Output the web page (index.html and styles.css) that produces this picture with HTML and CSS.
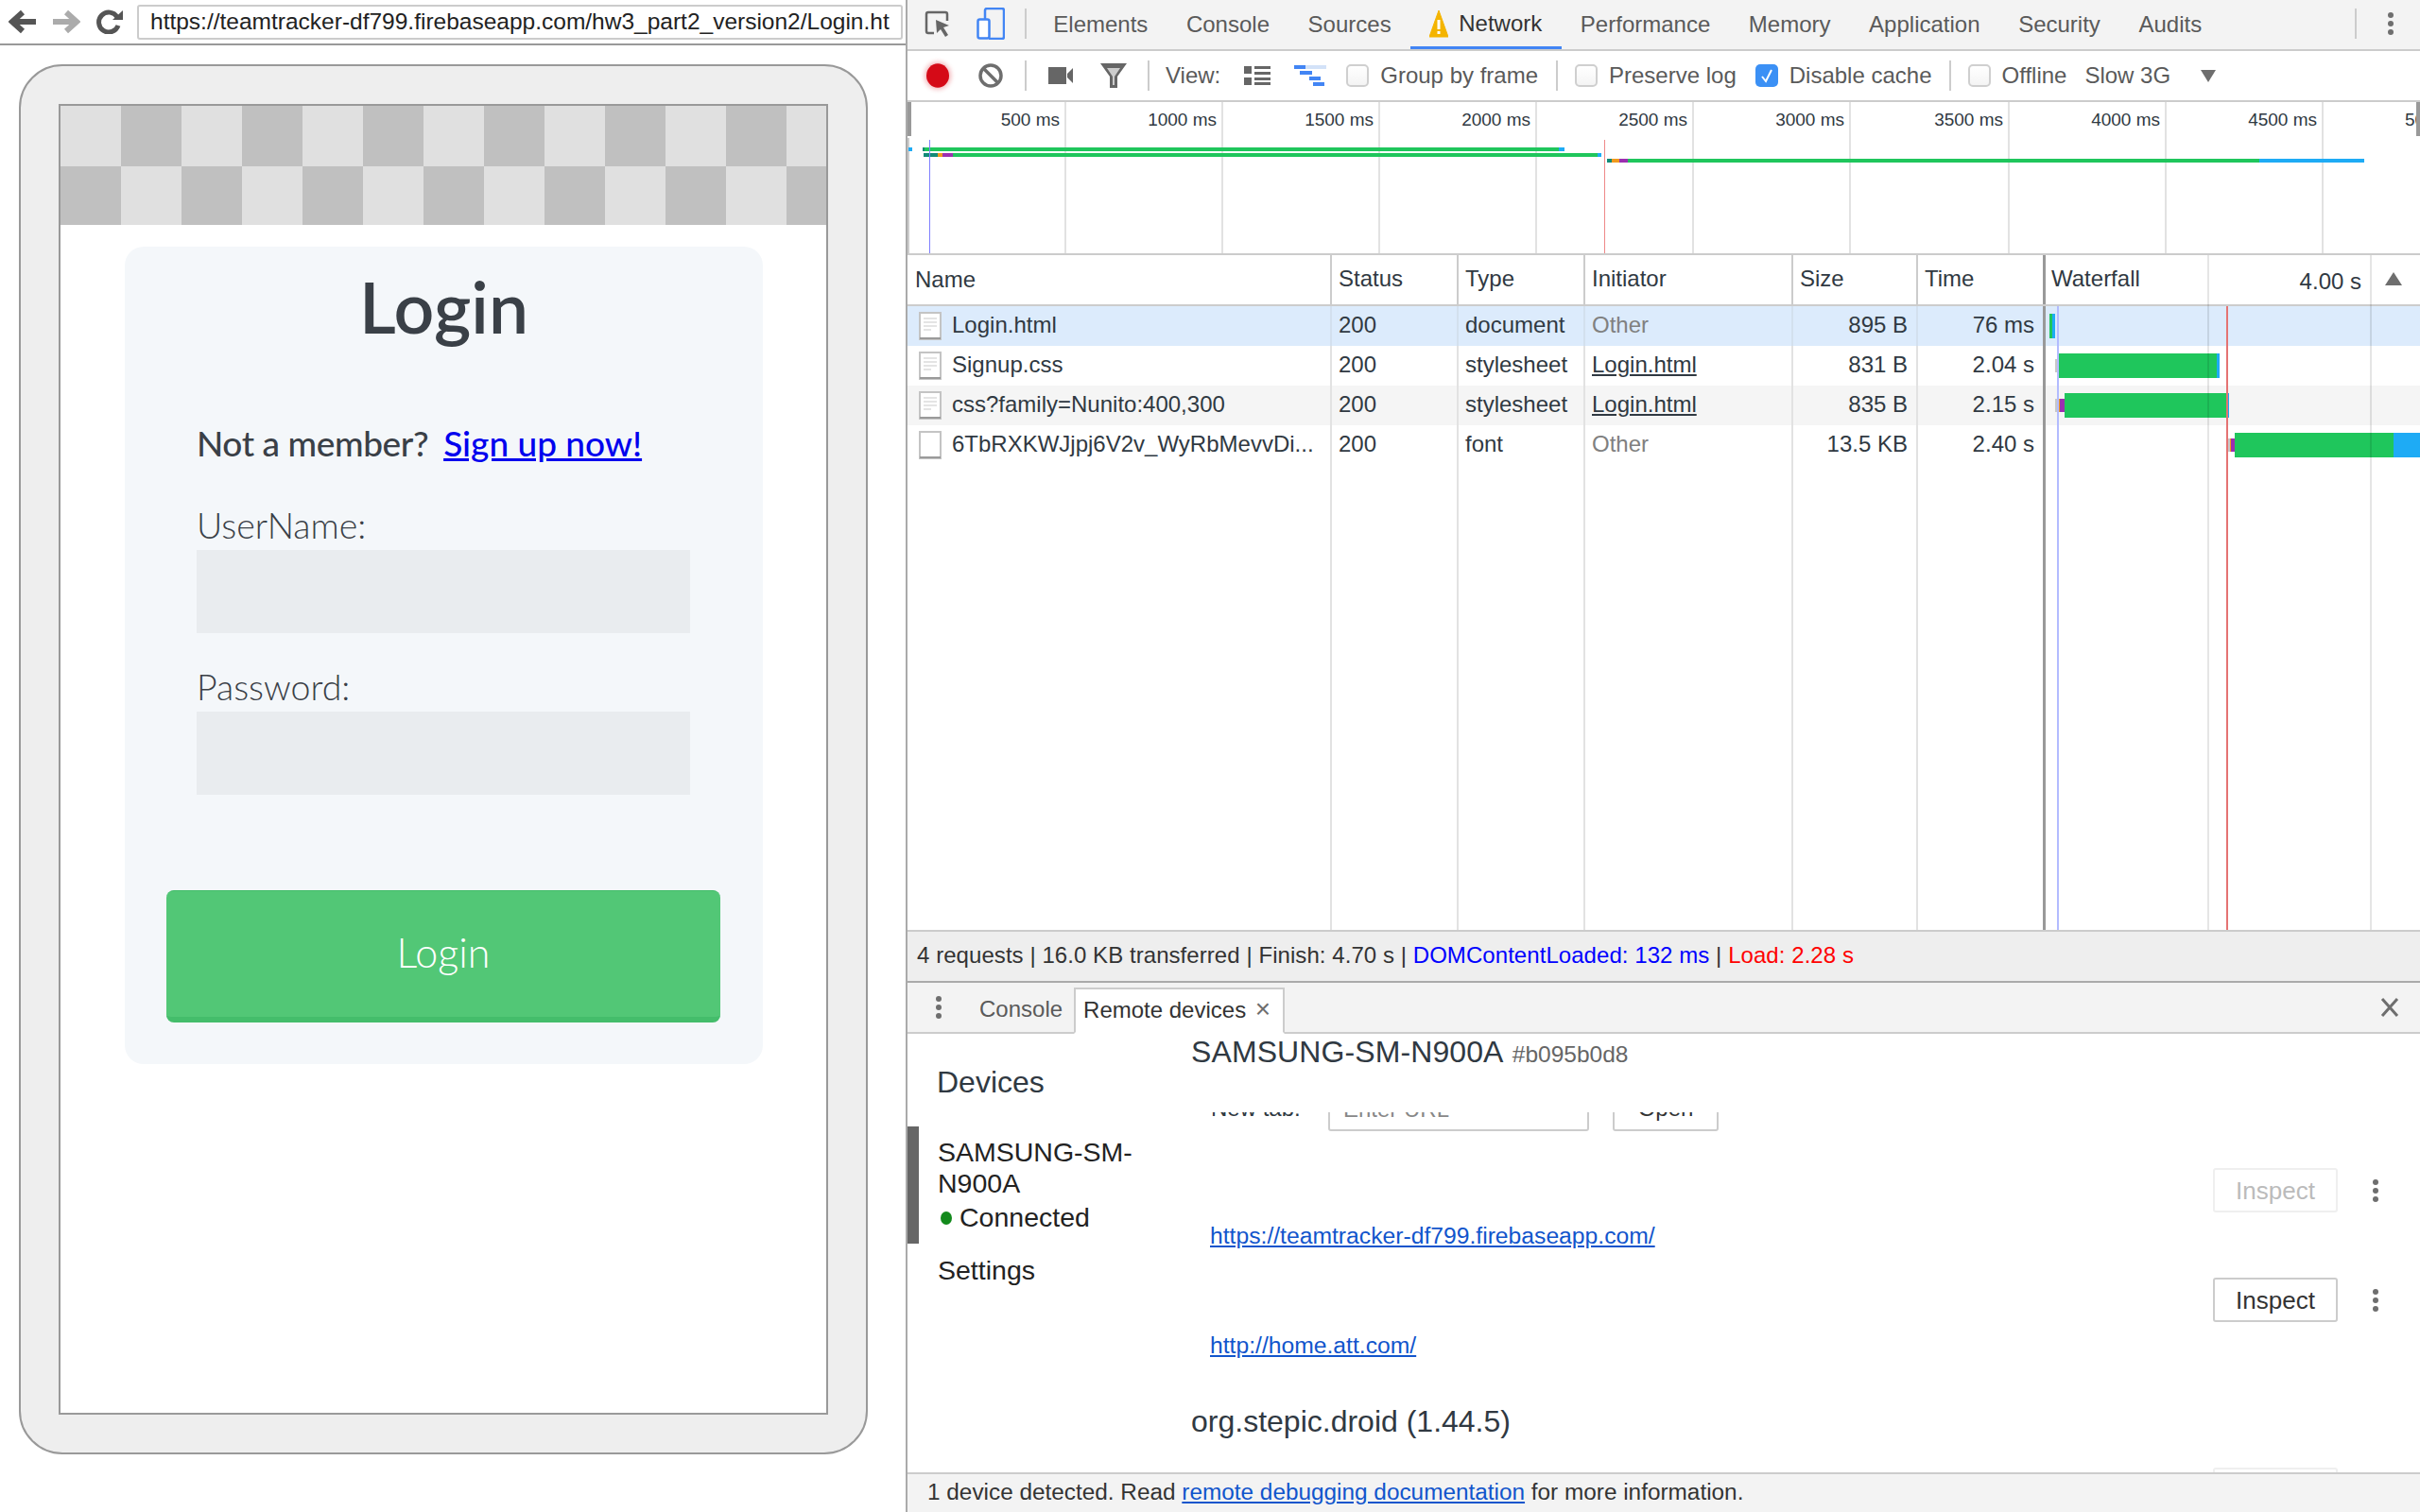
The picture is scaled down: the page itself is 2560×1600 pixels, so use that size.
FILE: index.html
```html
<!DOCTYPE html>
<html lang="en">
<head>
  <meta charset="UTF-8">
  <title>Remote devices</title>
  <link rel="stylesheet" href="styles.css">
</head>
<body>
  <svg class="defs" width="0" height="0">
    <symbol id="dots" viewBox="0 0 8 26">
      <circle cx="4" cy="4" r="3"/><circle cx="4" cy="13" r="3"/><circle cx="4" cy="22" r="3"/>
    </symbol>
    <symbol id="file" viewBox="0 0 24 30">
      <rect x="1" y="1" width="22" height="28" fill="#fff" stroke="#c4c4c4" stroke-width="2"/>
      <rect x="1" y="27" width="22" height="2" fill="#9a9a9a"/>
    </symbol>
    <symbol id="file-lines" viewBox="0 0 24 30">
      <rect x="1" y="1" width="22" height="28" fill="#fff" stroke="#c4c4c4" stroke-width="2"/>
      <rect x="1" y="27" width="22" height="2" fill="#9a9a9a"/>
      <path d="M5 7h14M5 11h14M5 15h14M5 19h8" stroke="#e4e4e4" stroke-width="2"/>
    </symbol>
  </svg>

  <div class="viewer">
    <div class="browser-bar">
      <svg class="nav-icon" width="30" height="26" viewBox="0 0 30 26"><path d="M29 13H6M15 3L4 13l11 10" fill="none" stroke="#555" stroke-width="6"/></svg>
      <svg class="nav-icon" width="30" height="26" viewBox="0 0 30 26"><path d="M1 13h23M15 3l11 10-11 10" fill="none" stroke="#ababab" stroke-width="6"/></svg>
      <svg class="nav-icon" width="30" height="26" viewBox="0 0 30 26"><path d="M23 8a10.500 10.500 0 1 0 1 9" fill="none" stroke="#555" stroke-width="5"/><path d="M18 11L29 1v10z" fill="#555"/></svg>
      <div class="address">https://teamtracker-df799.firebaseapp.com/hw3_part2_version2/Login.ht</div>
    </div>

    <div class="device">
      <div class="screen">
        <div class="checker"></div>
        <div class="card">
          <h1>Login</h1>
          <p class="member">Not a member? <a href="#">Sign up now!</a></p>
          <div class="field-label">UserName:</div>
          <div class="field"></div>
          <div class="field-label">Password:</div>
          <div class="field"></div>
          <div class="login-btn">Login</div>
        </div>
      </div>
    </div>
  </div>

  <div class="devtools">
    <div class="tabbar">
      <div class="tool">
        <svg width="28" height="28" viewBox="0 0 28 28"><path d="M10 24H4a2 2 0 0 1-2-2V4a2 2 0 0 1 2-2h18a2 2 0 0 1 2 2v7" fill="none" stroke="#666" stroke-width="2.500"/><path d="M12 10l14 6-6 2 5 8-3 2-5-8-4 4z" fill="#666"/></svg>
      </div>
      <div class="tool">
        <svg width="30" height="34" viewBox="0 0 30 34"><path d="M9 12V3a2 2 0 0 1 2-2h16a2 2 0 0 1 2 2v28a2 2 0 0 1-2 2H13" fill="none" stroke="#4285f4" stroke-width="2.500"/><rect x="1.500" y="12.500" width="12" height="20" rx="2" fill="#fff" stroke="#4285f4" stroke-width="2.500"/></svg>
      </div>
      <span class="sep tall"></span>
      <div class="tab">Elements</div>
      <div class="tab">Console</div>
      <div class="tab">Sources</div>
      <div class="tab active">
        <svg class="warn" width="20" height="30" viewBox="0 0 20 30"><path d="M10 1L20 29H0z" fill="#f4b400" stroke="#f4b400" stroke-linejoin="round"/><rect x="8.500" y="11" width="3" height="10" fill="#fff"/><rect x="8.500" y="23" width="3" height="3" fill="#fff"/></svg>
        Network
      </div>
      <div class="tab">Performance</div>
      <div class="tab">Memory</div>
      <div class="tab">Application</div>
      <div class="tab">Security</div>
      <div class="tab">Audits</div>
      <span class="sep tall push"></span>
      <div class="tool"><svg class="dots" width="8" height="26"><use href="#dots"/></svg></div>
    </div>

    <div class="toolbar">
      <div class="tool"><span class="record"></span></div>
      <div class="tool">
        <svg width="26" height="26" viewBox="0 0 26 26"><circle cx="13" cy="13" r="11" fill="none" stroke="#6e6e6e" stroke-width="3.500"/><path d="M5 5l16 16" stroke="#6e6e6e" stroke-width="3.500"/></svg>
      </div>
      <span class="sep"></span>
      <div class="tool">
        <svg width="26" height="18" viewBox="0 0 26 18"><rect y="0" width="19" height="18" fill="#666"/><path d="M20 7l6-6v16l-6-6z" fill="#666"/></svg>
      </div>
      <div class="tool">
        <svg width="28" height="26" viewBox="0 0 28 26"><path d="M0 0h28L18 14v12h-8V14z" fill="#666"/><path d="M7 5h14l-6 9v9h-2v-9z" fill="#ccc"/></svg>
      </div>
      <span class="sep"></span>
      <span class="tool-text view-label">View:</span>
      <div class="tool list-tool">
        <svg width="28" height="20" viewBox="0 0 28 20"><path d="M0 0h8v8H0zM0 12h8v8H0zM11 0h17v3H11zM11 6h17v3H11zM11 12h17v3H11zM11 17h17v3H11z" fill="#666"/></svg>
      </div>
      <div class="tool">
        <svg width="34" height="22" viewBox="0 0 34 22"><rect x="12" y="0" width="22" height="4" fill="#d3e2f8"/><path d="M0 0h12v4H0zM6 6h13v4H6zM16 12h12v4H16zM20 18h12v4H20z" fill="#4285f4"/></svg>
      </div>
      <label class="check first"><span class="box"></span>Group by frame</label>
      <span class="sep wide"></span>
      <label class="check"><span class="box"></span>Preserve log</label>
      <label class="check next">
        <span class="box checked"><svg width="14" height="16" viewBox="0 0 14 16"><path d="M2 9l4 5 6-12" fill="none" stroke="#fff" stroke-width="2"/></svg></span>
        Disable cache
      </label>
      <span class="sep wide"></span>
      <label class="check tight"><span class="box"></span>Offline</label>
      <span class="tool-text throttle">Slow 3G</span>
      <span class="throttle-arrow"></span>
    </div>

    <div class="overview">
      <div class="ticks">
        <div class="tick">500 ms</div>
        <div class="tick">1000 ms</div>
        <div class="tick">1500 ms</div>
        <div class="tick">2000 ms</div>
        <div class="tick">2500 ms</div>
        <div class="tick">3000 ms</div>
        <div class="tick">3500 ms</div>
        <div class="tick">4000 ms</div>
        <div class="tick">4500 ms</div>
        <div class="tick last">5000 ms</div>
      </div>
      <span class="grip left"></span>
      <span class="grip right"></span>
      <span class="ov-rail"></span>
      <span class="ov-bar blue" style="left:1px;top:48px;width:4px"></span>
      <span class="ov-bar teal" style="left:16px;top:48px;width:2px"></span>
      <span class="ov-bar green" style="left:18px;top:48px;width:671px"></span>
      <span class="ov-bar blue" style="left:689px;top:48px;width:6px"></span>
      <span class="ov-bar teal" style="left:17px;top:54px;width:15px"></span>
      <span class="ov-bar orange" style="left:32px;top:54px;width:5px"></span>
      <span class="ov-bar purple" style="left:37px;top:54px;width:11px"></span>
      <span class="ov-bar green" style="left:48px;top:54px;width:682px"></span>
      <span class="ov-bar blue" style="left:730px;top:54px;width:4px"></span>
      <span class="ov-bar teal" style="left:740px;top:60px;width:5px"></span>
      <span class="ov-bar orange" style="left:745px;top:60px;width:8px"></span>
      <span class="ov-bar purple" style="left:753px;top:60px;width:9px"></span>
      <span class="ov-bar green" style="left:762px;top:60px;width:668px"></span>
      <span class="ov-bar blue" style="left:1430px;top:60px;width:111px"></span>
      <span class="ov-mark dcl" style="left:23px"></span>
      <span class="ov-mark load" style="left:737px"></span>
    </div>

    <div class="net-table">
      <div class="net-row head">
        <div class="cell name">Name</div>
        <div class="cell">Status</div>
        <div class="cell">Type</div>
        <div class="cell">Initiator</div>
        <div class="cell">Size</div>
        <div class="cell">Time</div>
        <div class="cell wf wf-head">
          <span>Waterfall</span>
          <span class="wf-scale">4.00 s</span>
          <span class="sort-arrow"></span>
        </div>
      </div>
      <div class="net-row selected">
        <div class="cell name"><svg class="file" width="24" height="30"><use href="#file-lines"/></svg><span class="file-name">Login.html</span></div>
        <div class="cell">200</div>
        <div class="cell">document</div>
        <div class="cell muted">Other</div>
        <div class="cell num">895 B</div>
        <div class="cell num">76 ms</div>
        <div class="cell wf">
          <span class="wf-bar green" style="left:4px;width:3px"></span>
          <span class="wf-bar blue" style="left:7px;width:3px"></span>
        </div>
      </div>
      <div class="net-row">
        <div class="cell name"><svg class="file" width="24" height="30"><use href="#file-lines"/></svg><span class="file-name">Signup.css</span></div>
        <div class="cell">200</div>
        <div class="cell">stylesheet</div>
        <div class="cell"><a class="init-link" href="#">Login.html</a></div>
        <div class="cell num">831 B</div>
        <div class="cell num">2.04 s</div>
        <div class="cell wf">
          <span class="wf-bar short gray" style="left:10px;width:2px"></span>
          <span class="wf-bar green" style="left:12px;width:169px"></span>
          <span class="wf-bar blue" style="left:181px;width:3px"></span>
        </div>
      </div>
      <div class="net-row alt">
        <div class="cell name"><svg class="file" width="24" height="30"><use href="#file-lines"/></svg><span class="file-name">css?family=Nunito:400,300</span></div>
        <div class="cell">200</div>
        <div class="cell">stylesheet</div>
        <div class="cell"><a class="init-link" href="#">Login.html</a></div>
        <div class="cell num">835 B</div>
        <div class="cell num">2.15 s</div>
        <div class="cell wf">
          <span class="wf-bar short gray" style="left:10px;width:3px"></span>
          <span class="wf-bar short orange" style="left:13px;width:2px"></span>
          <span class="wf-bar short purple" style="left:15px;width:5px"></span>
          <span class="wf-bar green" style="left:20px;width:171px"></span>
          <span class="wf-bar blue" style="left:191px;width:3px"></span>
        </div>
      </div>
      <div class="net-row">
        <div class="cell name"><svg class="file" width="24" height="30"><use href="#file"/></svg><span class="file-name">6TbRXKWJjpj6V2v_WyRbMevvDi...</span></div>
        <div class="cell">200</div>
        <div class="cell">font</div>
        <div class="cell muted">Other</div>
        <div class="cell num">13.5 KB</div>
        <div class="cell num">2.40 s</div>
        <div class="cell wf">
          <span class="wf-bar short gray" style="left:193px;width:2px"></span>
          <span class="wf-bar short orange" style="left:195px;width:1px"></span>
          <span class="wf-bar short purple" style="left:196px;width:4px"></span>
          <span class="wf-bar green" style="left:200px;width:168px"></span>
          <span class="wf-bar blue" style="left:368px;width:28px"></span>
        </div>
      </div>
      <div class="net-row filler">
        <div class="cell"></div><div class="cell"></div><div class="cell"></div>
        <div class="cell"></div><div class="cell"></div><div class="cell"></div>
        <div class="cell wf"></div>
      </div>
      <div class="wf-lines">
        <span class="wf-line grid" style="left:171px"></span>
        <span class="wf-line grid" style="left:343px"></span>
        <span class="wf-line dcl" style="left:12px"></span>
        <span class="wf-line load" style="left:191px"></span>
      </div>
    </div>

    <div class="summary">
      4 requests | 16.0 KB transferred | Finish: 4.70 s |
      <span class="dcl-text">DOMContentLoaded: 132 ms</span> |
      <span class="load-text">Load: 2.28 s</span>
    </div>

    <div class="drawer-tabs">
      <div class="tool"><svg class="dots" width="8" height="26"><use href="#dots"/></svg></div>
      <div class="drawer-tab">Console</div>
      <div class="drawer-tab open">Remote devices <span class="tab-x">×</span></div>
      <svg class="drawer-close" width="20" height="20" viewBox="0 0 20 20"><path d="M2 1l16 18M18 1L2 19" stroke="#6e6e6e" stroke-width="3"/></svg>
    </div>

    <div class="remote">
      <div class="sidebar">
        <div class="side-title">Devices</div>
        <div class="side-item">
          <div>SAMSUNG-SM-<br>N900A</div>
          <div class="conn"><span class="conn-dot"></span>Connected</div>
        </div>
        <div class="side-link">Settings</div>
      </div>
      <div class="remote-main">
        <div class="device-title">SAMSUNG-SM-N900A <span class="serial">#b095b0d8</span></div>
        <div class="scroller">
          <div class="new-tab">
            <span class="new-tab-label">New tab:</span>
            <span class="url-input">Enter URL</span>
            <span class="open-btn">Open</span>
          </div>
          <div class="page-actions first">
            <span class="inspect off">Inspect</span>
            <svg class="dots" width="8" height="26"><use href="#dots"/></svg>
          </div>
          <a class="page-url" href="#">https://teamtracker-df799.firebaseapp.com/</a>
          <div class="page-actions">
            <span class="inspect">Inspect</span>
            <svg class="dots" width="8" height="26"><use href="#dots"/></svg>
          </div>
          <a class="page-url" href="#">http://home.att.com/</a>
          <div class="app-title">org.stepic.droid (1.44.5)</div>
          <div class="page-actions app">
            <span class="inspect off">Inspect</span>
            <svg class="dots" width="8" height="26"><use href="#dots"/></svg>
          </div>
        </div>
      </div>
    </div>

    <div class="status-foot">1 device detected. Read <a href="#">remote debugging documentation</a> for more information.</div>
  </div>
</body>
</html>
```

FILE: styles.css
```css
:root {
  --text: #303942;
  --tool-text: #5a5a5a;
  --line: #cccccc;
  --grid: #e2e2e2;
  --chrome: #f3f3f3;
  --blue: #4285f4;
  --bar-green: #1fc65c;
  --bar-blue: #1eabf5;
  --link: #1155cc;
}

* {
  box-sizing: border-box;
}

html, body {
  margin: 0;
  height: 100%;
}

body {
  display: flex;
  width: 2560px;
  height: 1600px;
  overflow: hidden;
  background: #fff;
  font-family: "Liberation Sans", Arial, sans-serif;
  font-size: 24px;
  color: var(--text);
}

.defs {
  position: absolute;
}

/* left side: device preview */

.viewer {
  width: 960px;
  flex: none;
  border-right: 2px solid #aaa;
}

.browser-bar {
  display: flex;
  align-items: center;
  height: 48px;
  padding-left: 9px;
  gap: 16px;
  border-bottom: 2px solid #999;
}

.nav-icon {
  flex: none;
}

.address {
  margin-left: -2px;
  width: 810px;
  height: 37px;
  padding-left: 12px;
  border: 2px solid #ccc;
  border-radius: 3px;
  font-size: 24.5px;
  line-height: 32px;
  color: #222;
  white-space: nowrap;
  overflow: hidden;
}

.device {
  width: 898px;
  height: 1471px;
  margin: 20px 0 0 20px;
  padding: 40px;
  border: 2px solid #999;
  border-radius: 46px;
  background: #eee;
}

.screen {
  height: 1387px;
  border: 2px solid #999;
  background: #fff;
}

.checker {
  height: 126px;
  background: repeating-conic-gradient(#c0c0c0 0 25%, #e0e0e0 0 50%) 0 0 / 128px 128px;
}

.card {
  width: 675px;
  height: 865px;
  margin: 23px 0 0 68px;
  padding-top: 20px;
  border-radius: 20px;
  background: #f4f7fa;
  font-family: Lato, "Open Sans", sans-serif;
  color: #3a4047;
}

.card h1 {
  margin: 0;
  font-size: 75px;
  line-height: 86px;
  font-weight: 600;
  text-align: center;
}

.member {
  margin: 76px 0 0 76px;
  font-size: 37px;
  line-height: 52px;
  font-weight: 500;
  letter-spacing: -.4px;
  white-space: pre-wrap;
}

.member a {
  margin-left: 7px;
  letter-spacing: 0;
  color: #0000ee;
}

.field-label {
  margin: 35px 0 0 76px;
  font-size: 37.5px;
  line-height: 52px;
  font-weight: 300;
}

.field {
  width: 522px;
  height: 88px;
  margin: 0 0 0 76px;
  background: #e9ecef;
}

.field + .field-label {
  margin-top: 31px;
}

.login-btn {
  width: 586px;
  height: 140px;
  margin: 101px 0 0 44px;
  border-top: 1px solid #44bd6b;
  border-bottom: 6px solid #44bd6b;
  border-radius: 8px;
  background: #52c776;
  color: #fff;
  font-size: 43px;
  font-weight: 300;
  line-height: 130px;
  text-align: center;
}

/* right side: devtools */

.devtools {
  flex: 1;
  display: flex;
  flex-direction: column;
  min-width: 0;
}

.tabbar {
  display: flex;
  align-items: center;
  height: 54px;
  flex: none;
  padding: 0 3px 2px 4px;
  background: var(--chrome);
  border-bottom: 2px solid var(--line);
}

.tool {
  display: flex;
  align-items: center;
  justify-content: center;
  flex: none;
  width: 56px;
}

.dots {
  fill: #6e6e6e;
  flex: none;
}

.sep {
  flex: none;
  width: 2px;
  height: 32px;
  margin: 0 8px;
  background: #ccc;
}

.sep.wide {
  margin: 0 18px 0 19px;
}

.sep.push {
  margin-left: auto;
}

.tab {
  display: flex;
  align-items: center;
  gap: 11px;
  height: 52px;
  margin-bottom: -2px;
  padding: 0 20.3px;
  color: var(--tool-text);
}

.tab:first-of-type {
  margin-left: 7px;
}

.tab.active {
  color: #333;
  border-bottom: 3px solid var(--blue);
}

.toolbar {
  display: flex;
  align-items: center;
  height: 54px;
  flex: none;
  padding-left: 4px;
  border-bottom: 2px solid var(--line);
  color: var(--tool-text);
}

.record {
  width: 24px;
  height: 32px;
  border-radius: 50%;
  background: #d50a17;
  box-shadow: 0 0 6px 2px rgba(213, 10, 23, .3);
  transform: scaleY(.8);
}

.tool-text {
  flex: none;
}

.view-label {
  margin-left: 9px;
}

.list-tool {
  margin-left: 11px;
}

.check {
  display: flex;
  align-items: center;
  gap: 12px;
  flex: none;
}

.check.first {
  margin-left: 10px;
}

.check.next {
  margin-left: 20px;
}

.check.tight {
  gap: 11px;
}

.box {
  display: flex;
  align-items: center;
  justify-content: center;
  width: 24px;
  height: 24px;
  border: 2px solid #cfcfcf;
  border-radius: 5px;
  background: linear-gradient(#fff, #f4f4f4);
}

.box.checked {
  border: 0;
  background: #3b90f5;
}

.throttle {
  margin-left: 19px;
}

.throttle-arrow {
  margin-left: 32px;
  border-left: 8px solid transparent;
  border-right: 8px solid transparent;
  border-top: 13px solid #6e6e6e;
}

/* overview strip */

.overview {
  position: relative;
  height: 162px;
  flex: none;
  border-bottom: 2px solid var(--line);
  overflow: hidden;
}

.ticks {
  display: grid;
  grid-template-columns: 168px 166px 166px 166px 166px 166px 168px 166px 166px 1fr;
  height: 100%;
}

.tick {
  border-right: 2px solid var(--grid);
  padding: 7px 5px 0 0;
  font-size: 19px;
  line-height: 24px;
  text-align: right;
  white-space: nowrap;
}

.tick.last {
  border-right: 0;
  padding-left: 86px;
  text-align: left;
  overflow: hidden;
}

.grip {
  position: absolute;
  top: 0;
  width: 4px;
  height: 36px;
  background: #999;
}

.grip.left {
  left: 0;
}

.grip.right {
  right: 0;
}

.ov-rail {
  position: absolute;
  left: 0;
  top: 38px;
  bottom: 0;
  width: 2px;
  background: var(--line);
}

.ov-bar {
  position: absolute;
  height: 4px;
}

.ov-mark {
  position: absolute;
  top: 40px;
  bottom: 0;
  width: 1px;
}

.ov-mark.dcl {
  background: #7f7fff;
}

.ov-mark.load {
  background: #e88;
}

.green { background: var(--bar-green); }
.blue { background: var(--bar-blue); }
.teal { background: #128a77; }
.orange { background: #f09a1e; }
.purple { background: #9c2fb0; }
.gray { background: #c8c8c8; }

/* request table */

.net-table {
  position: relative;
  flex: 1;
  display: flex;
  flex-direction: column;
  min-height: 0;
}

.net-row {
  display: grid;
  grid-template-columns: 449px 134px 134px 220px 132px 135px 1fr;
  height: 42px;
  flex: none;
  line-height: 40px;
}

.net-row.head {
  height: 54px;
  line-height: 50px;
  border-bottom: 2px solid var(--line);
}

.net-row.selected {
  background: #dcebfc;
}

.net-row.alt {
  background: #f5f5f5;
}

.net-row.filler {
  flex: 1;
}

.cell {
  padding: 0 7px;
  border-right: 2px solid var(--grid);
  white-space: nowrap;
  overflow: hidden;
}

.head .cell {
  border-right-color: var(--line);
}

.selected .cell {
  border-right-color: #d3e0ee;
}

.cell.name {
  display: flex;
  align-items: center;
  gap: 11px;
  padding-left: 12px;
}

.head .cell.name {
  padding-left: 8px;
}

.file-name {
  margin-top: -2px;
}

.cell.num {
  padding-right: 9px;
  text-align: right;
}

.cell:nth-child(6) {
  border-right: 3px solid #999;
}

.cell.wf {
  position: relative;
  border-right: 0;
  padding: 0;
}

.cell.wf-head {
  padding-left: 6px;
  display: flex;
}

.wf-scale {
  position: absolute;
  right: 62px;
  top: 3px;
}

.sort-arrow {
  position: absolute;
  right: 19px;
  top: 18px;
  border-left: 9px solid transparent;
  border-right: 9px solid transparent;
  border-bottom: 14px solid #6e6e6e;
}

.file {
  flex: none;
}

.muted {
  color: #808080;
}

.init-link {
  color: var(--text);
}

.wf-bar {
  position: absolute;
  top: 8px;
  height: 26px;
}

.wf-bar.short {
  top: 14px;
  height: 14px;
}

.wf-lines {
  position: absolute;
  left: 1204px;
  right: 0;
  top: 0;
  bottom: 0;
  pointer-events: none;
}

.wf-line {
  position: absolute;
  top: 54px;
  bottom: 0;
  width: 2px;
}

.wf-line.grid {
  top: 0;
  background: rgba(0, 0, 0, .1);
}

.wf-line.dcl {
  background: #b3bcff;
}

.wf-line.load {
  background: #e57373;
}

.summary {
  height: 56px;
  flex: none;
  padding-left: 10px;
  border-top: 2px solid var(--line);
  border-bottom: 2px solid #aaa;
  background: #eee;
  color: #333;
  line-height: 50px;
  letter-spacing: .06px;
}

.dcl-text { color: #0000ff; }
.load-text { color: #ff0000; }

/* drawer */

.drawer-tabs {
  display: flex;
  align-items: flex-end;
  height: 54px;
  flex: none;
  padding-left: 5px;
  background: var(--chrome);
  border-bottom: 2px solid var(--line);
  line-height: 46px;
}

.drawer-tabs .tool {
  height: 52px;
  align-self: flex-start;
}

.drawer-tab {
  height: 47px;
  padding: 0 12px 0 15px;
  color: var(--tool-text);
}

.drawer-tab.open {
  margin-bottom: -2px;
  height: 49px;
  padding: 0 0 0 8px;
  width: 223px;
  border: 2px solid var(--line);
  border-bottom: 2px solid #fff;
  background: #fff;
  color: #333;
  line-height: 44px;
}

.tab-x {
  margin-left: 3px;
  font-size: 28px;
  line-height: 24px;
  color: #6e6e6e;
}

.drawer-close {
  margin: 0 22px 16px auto;
}

.remote {
  display: flex;
  height: 464px;
  flex: none;
  overflow: hidden;
}

.sidebar {
  width: 300px;
  flex: none;
  padding-top: 32px;
  font-size: 28.5px;
  line-height: 33px;
}

.side-title {
  padding-left: 31px;
  margin-bottom: 28px;
  font-size: 32px;
  line-height: 38px;
}

.side-item {
  height: 124px;
  padding: 11px 0 0 20px;
  border-left: 12px solid #666;
  color: #222;
}

.conn {
  display: flex;
  align-items: center;
  margin-top: 3px;
}

.conn-dot {
  width: 12px;
  height: 14px;
  margin: 0 8px 0 3px;
  border-radius: 50%;
  background: #138a1c;
}

.side-link {
  margin-top: 12px;
  padding-left: 32px;
  color: #222;
}

.remote-main {
  flex: 1;
  display: flex;
  flex-direction: column;
  min-width: 0;
}

.device-title {
  height: 83px;
  flex: none;
  font-size: 32px;
  line-height: 38px;
  letter-spacing: .1px;
}

.serial {
  margin-left: 2px;
  font-size: 24.5px;
  letter-spacing: 0;
  color: #666;
}

.scroller {
  flex: 1;
  min-height: 0;
  overflow: hidden;
}

.new-tab {
  display: flex;
  align-items: center;
  height: 48px;
  margin-top: -28px;
  padding-left: 21px;
}

.new-tab-label {
  width: 124px;
}

.url-input {
  width: 276px;
  height: 48px;
  padding-left: 14px;
  border: 2px solid #ccc;
  border-radius: 3px;
  color: #888;
  line-height: 46px;
}

.open-btn {
  width: 112px;
  height: 48px;
  margin-left: 25px;
  border: 2px solid #ccc;
  border-radius: 3px;
  text-align: center;
  line-height: 44px;
  color: #333;
}

.page-actions {
  display: flex;
  align-items: center;
  justify-content: flex-end;
  gap: 36px;
  height: 47px;
  margin-top: 29px;
  padding-right: 43px;
}

.page-actions.first {
  margin-top: 39px;
}

.page-actions.app {
  margin-top: 30px;
}

.inspect {
  width: 132px;
  height: 47px;
  border: 2px solid #ccc;
  border-radius: 3px;
  color: #333;
  font-size: 26px;
  text-align: center;
  line-height: 45px;
}

.inspect.off {
  border-color: #efefef;
  color: #bbb;
}

.page-url {
  display: block;
  width: fit-content;
  margin: 10px 0 0 20px;
  color: var(--link);
  font-size: 24.7px;
  line-height: 30px;
}

.app-title {
  margin-top: 46px;
  font-size: 32px;
  line-height: 38px;
}

.status-foot {
  height: 42px;
  flex: none;
  padding-left: 21px;
  border-top: 2px solid var(--line);
  background: var(--chrome);
  color: #333;
  font-size: 24.35px;
  line-height: 38px;
}

.status-foot a {
  color: var(--link);
}
```
